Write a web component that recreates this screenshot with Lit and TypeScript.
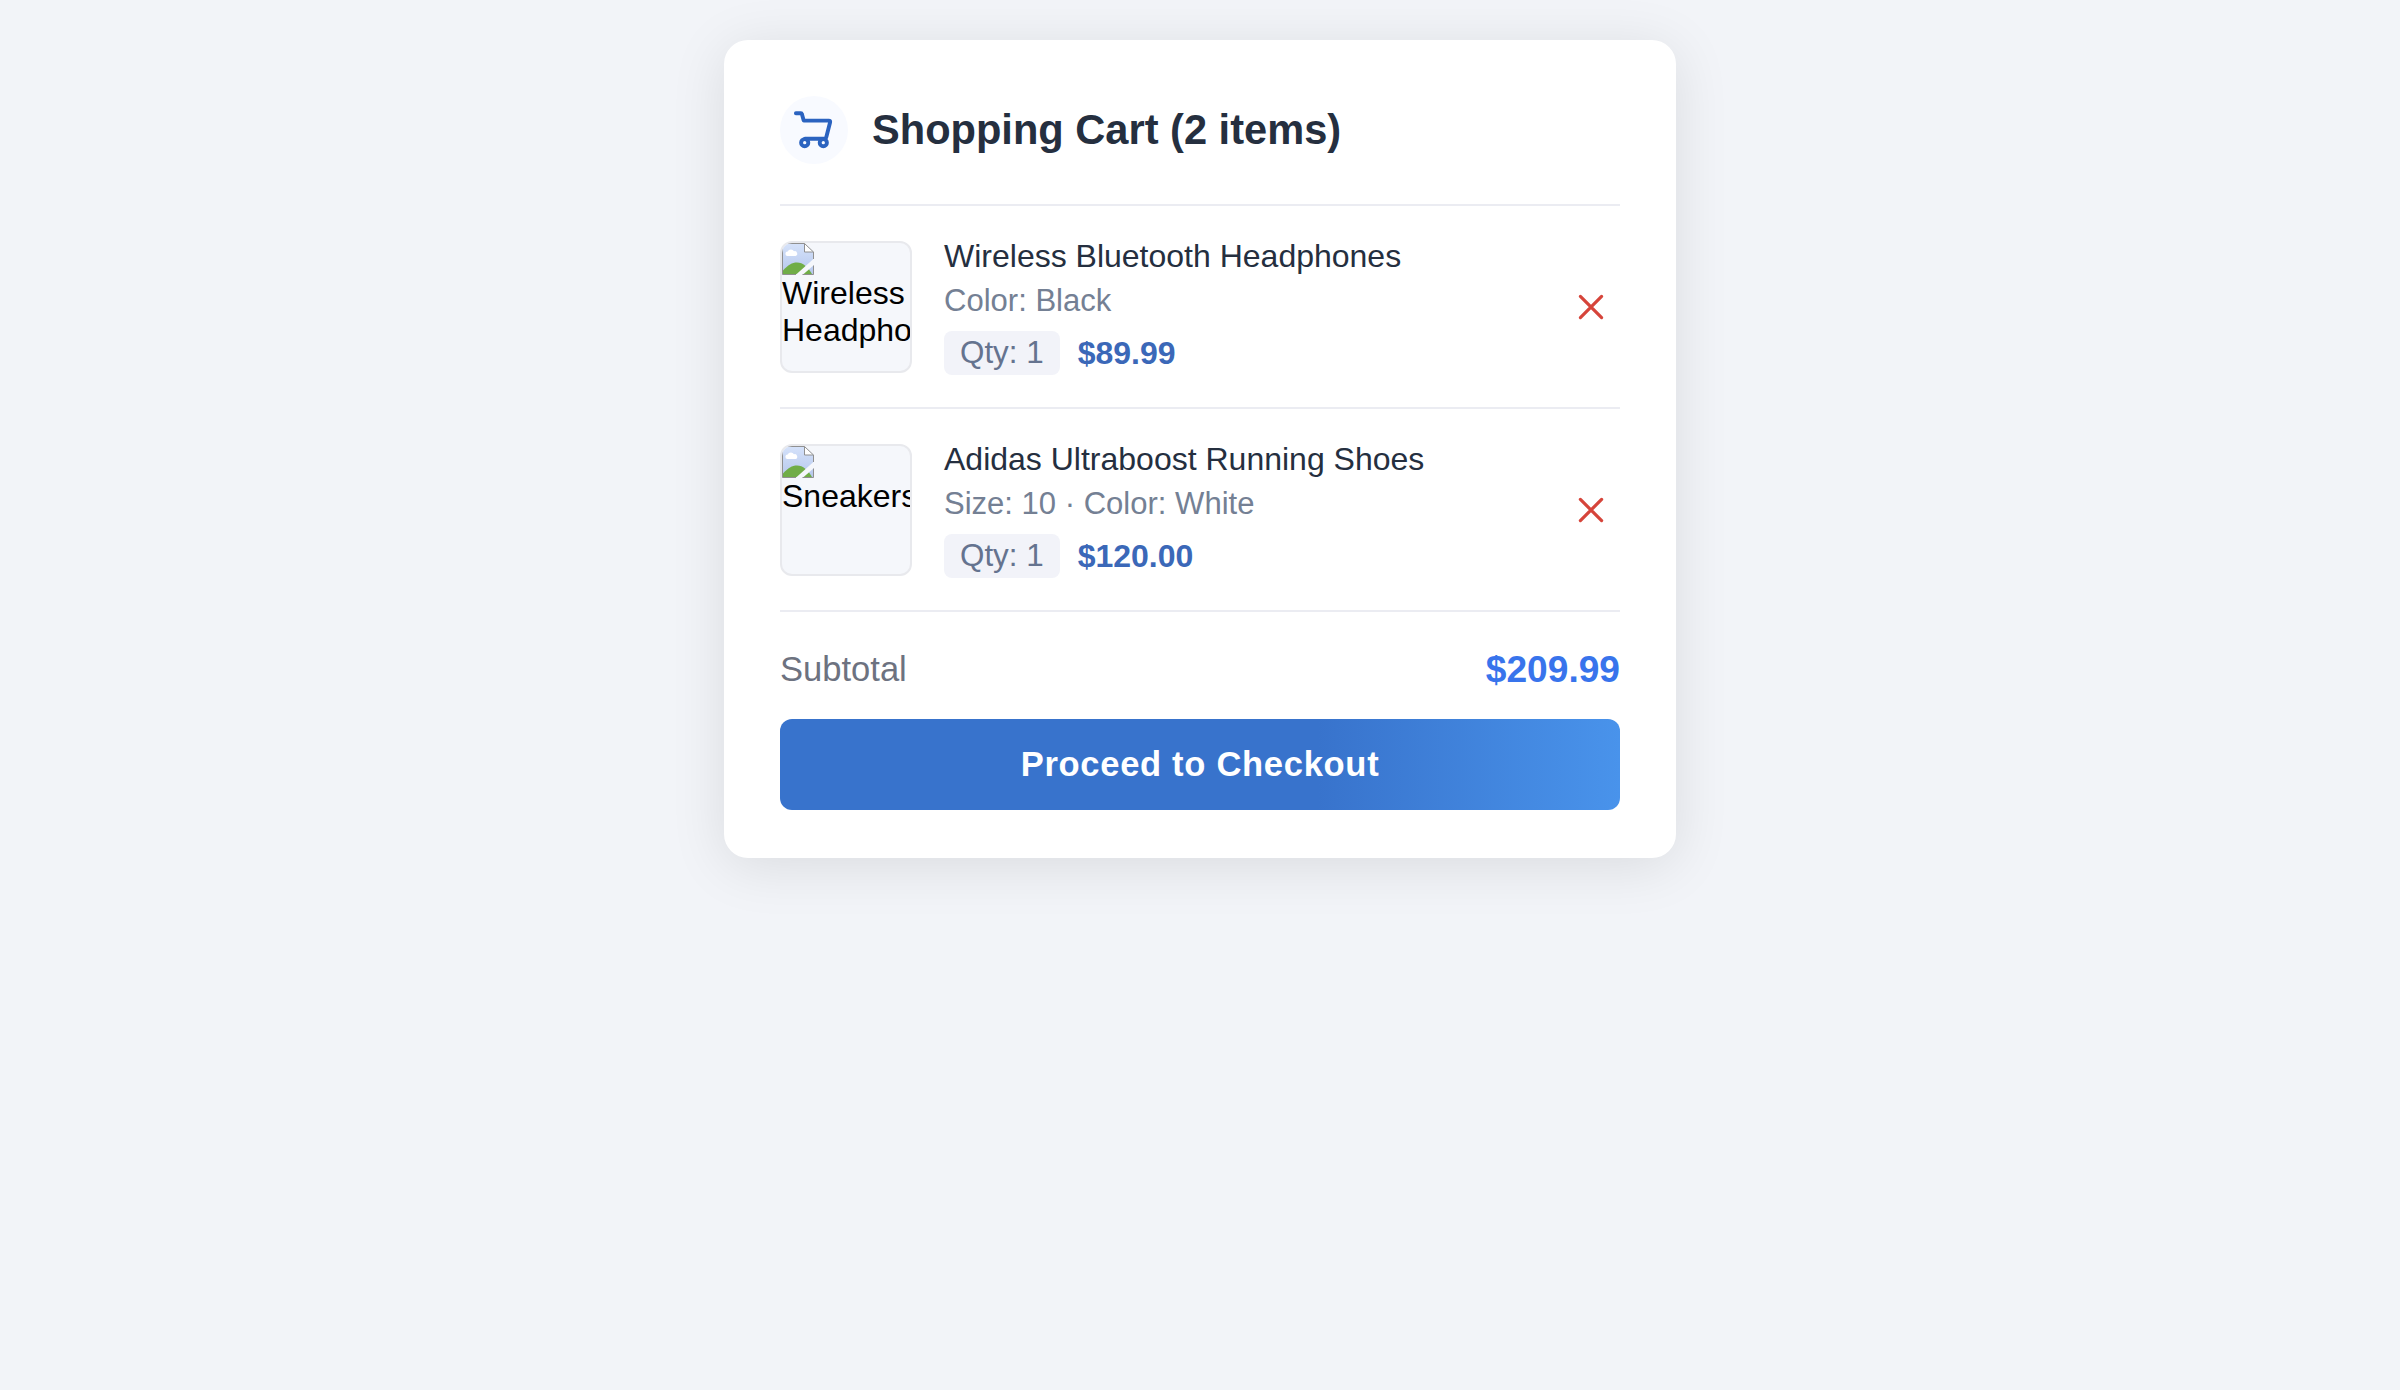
import { LitElement, html, css } from "lit";
import { customElement, property } from "lit/decorators.js";

interface Item {
  name: string;
  alt: string;
  meta: string;
  qty: number;
  price: number;
}

const ITEMS: Item[] = [
  { name: "Wireless Bluetooth Headphones", alt: "Wireless Headphones", meta: "Color: Black", qty: 1, price: 89.99 },
  { name: "Adidas Ultraboost Running Shoes", alt: "Sneakers", meta: "Size: 10 · Color: White", qty: 1, price: 120 },
];

const money = (n: number) => `$${n.toFixed(2)}`;

const cartIcon = html`<svg class="cart" viewBox="0 0 68 68" aria-hidden="true">
  <path d="M15.9 17.3h5q.8 0 1 .8l1.800 6.500H48.800q1.700 0 1.300 1.700L46.400 40.800q-.5 2-2.300 2H25" />
  <circle cx="24.7" cy="46.7" r="3.600" />
  <circle cx="43.3" cy="46.7" r="3.600" />
</svg>`;

const crossIcon = html`<svg class="cross" viewBox="0 0 36 36" aria-hidden="true">
  <path d="M7.400 7.400l21.200 21.200M28.600 7.400L7.400 28.600" />
</svg>`;

// Placeholder glyph for a product photo that is unavailable.
const missingImage = html`<svg class="missing" viewBox="0 0 32 32" aria-hidden="true">
  <defs>
    <linearGradient id="sky" x1="0" y1="0" x2="0" y2="1">
      <stop offset="0" stop-color="#d5e2fa" />
      <stop offset="1" stop-color="#b5c7ec" />
    </linearGradient>
  </defs>
  <path fill="url(#sky)" d="M.5 .5H22.500L31.500 9V31.500H.5Z" />
  <path fill="#fff" d="M5.500 13a2.200 2.200 0 0 1 .2-4.400 3.500 3.500 0 0 1 6.300-.3 2.400 2.400 0 0 1 1.500 4.700Z" />
  <path fill="#70ad47" d="M1 31V27.500C6 22 10 19.500 15 19.500C21 19.500 26 24 30 31Z" />
  <path fill="#f5f7fb" d="M32 15.500L13.500 32H20.500L32 22Z" />
  <path fill="#fff" d="M22.500 .5V9H31.500Z" />
  <path fill="none" stroke="#909090" d="M14 31.500H.5V.5H22.500L31.500 9V16M22.500 .5V9H31.500M31.500 22.500V31.500H20.500" />
</svg>`;

@customElement("cart-item")
export class CartItem extends LitElement {
  @property({ attribute: false }) item!: Item;

  static styles = css`
    :host {
      display: flex;
      align-items: center;
      padding: 32px 0;
      border-bottom: 2px solid #ebecf2;
    }
    .thumb {
      box-sizing: border-box;
      width: 132px;
      height: 132px;
      flex: none;
      border: 2px solid #e8e9ed;
      border-radius: 12px;
      background: #f5f7fb;
      overflow: hidden;
      color: #000;
      font-size: 32px;
      line-height: 37px;
    }
    .missing {
      display: block;
      width: 32px;
      height: 32px;
    }
    .info {
      flex: 1;
      margin-left: 32px;
    }
    .name {
      font-size: 32px;
      line-height: 37px;
      color: #252f3f;
    }
    .meta {
      margin-top: 8px;
      font-size: 31.04px;
      line-height: 36px;
      color: #748094;
    }
    .line {
      display: flex;
      align-items: center;
      gap: 18px;
      margin-top: 12px;
    }
    .qty {
      padding: 4px 16px;
      border-radius: 8px;
      background: #f2f3f9;
      color: #65738f;
      font-size: 31.36px;
      line-height: 36px;
    }
    .price {
      font-size: 32px;
      line-height: 36px;
      font-weight: 700;
      color: #3b68b8;
    }
    .remove {
      display: flex;
      margin-right: 11.5px;
      padding: 0;
      border: 0;
      background: none;
    }
    .cross {
      width: 36px;
      height: 36px;
      fill: none;
      stroke: #d6443a;
      stroke-width: 3.2;
      stroke-linecap: round;
    }
  `;

  render() {
    const { name, alt, meta, qty, price } = this.item;
    return html`
      <div class="thumb">${missingImage}${alt}</div>
      <div class="info">
        <div class="name">${name}</div>
        <div class="meta">${meta}</div>
        <div class="line">
          <span class="qty">Qty: ${qty}</span>
          <span class="price">${money(price)}</span>
        </div>
      </div>
      <button class="remove" aria-label="Remove">${crossIcon}</button>
    `;
  }
}

@customElement("app-root")
export class AppRoot extends LitElement {
  static styles = css`
    :host {
      display: flex;
      justify-content: center;
      align-items: flex-start;
      box-sizing: border-box;
      min-height: 100vh;
      padding-top: 40px;
      background: #f2f4f8;
      font-family: "Liberation Sans", Arial, sans-serif;
    }
    .card {
      box-sizing: border-box;
      width: 952px;
      padding: 56px 56px 48px;
      border-radius: 24px;
      background: #fff;
      box-shadow: 0 8px 56px rgba(0, 0, 0, 0.1);
    }
    .head {
      display: flex;
      align-items: center;
      gap: 24px;
      padding-bottom: 40px;
      border-bottom: 2px solid #ebecf2;
    }
    .badge {
      display: flex;
      width: 68px;
      height: 68px;
      border-radius: 50%;
      background: #f8faff;
    }
    .cart {
      width: 68px;
      height: 68px;
      fill: none;
      stroke: #2b63c0;
      stroke-width: 3.9;
      stroke-linecap: round;
      stroke-linejoin: round;
    }
    .title {
      margin: 0;
      font-size: 41.6px;
      line-height: 48px;
      font-weight: 700;
      color: #252f3f;
    }
    .subtotal {
      display: flex;
      align-items: center;
      justify-content: space-between;
      padding: 36px 0 28px;
      line-height: 43px;
    }
    .label {
      font-size: 34.56px;
      color: #6d7280;
    }
    .total {
      font-size: 37.12px;
      font-weight: 700;
      color: #3874ec;
    }
    .checkout {
      display: block;
      width: 100%;
      height: 91px;
      padding: 0;
      border: 0;
      border-radius: 12px;
      background: linear-gradient(90deg, #3873cc 64%, #4993eb);
      color: #fff;
      font: 700 34.56px "Liberation Sans", Arial, sans-serif;
      letter-spacing: 0.02em;
    }
  `;

  render() {
    const total = ITEMS.reduce((sum, i) => sum + i.price * i.qty, 0);
    return html`
      <section class="card">
        <header class="head">
          <span class="badge">${cartIcon}</span>
          <h1 class="title">Shopping Cart (${ITEMS.length} items)</h1>
        </header>
        ${ITEMS.map((item) => html`<cart-item .item=${item}></cart-item>`)}
        <div class="subtotal">
          <span class="label">Subtotal</span>
          <span class="total">${money(total)}</span>
        </div>
        <button class="checkout">Proceed to Checkout</button>
      </section>
    `;
  }
}
